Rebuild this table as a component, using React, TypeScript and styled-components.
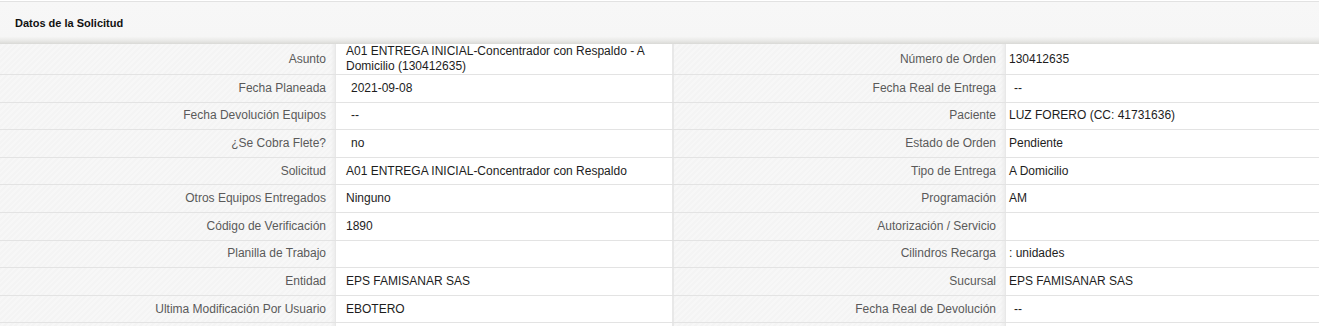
import styled, { createGlobalStyle } from 'styled-components';

const GlobalStyle = createGlobalStyle`
  body {
    margin: 0;
    background: #fff;
    font-family: 'Liberation Sans', Arial, sans-serif;
    font-size: 12px;
  }
`;

// one line of the detail sheet: label / value / label / value
type Field = { label: string; value: string; pad?: boolean };

const rows: [Field, Field][] = [
  [
    { label: 'Asunto', value: 'A01 ENTREGA INICIAL-Concentrador con Respaldo - A Domicilio (130412635)' },
    { label: 'Número de Orden', value: '130412635' },
  ],
  [
    { label: 'Fecha Planeada', value: '2021-09-08', pad: true },
    { label: 'Fecha Real de Entrega', value: '--', pad: true },
  ],
  [
    { label: 'Fecha Devolución Equipos', value: '--', pad: true },
    { label: 'Paciente', value: 'LUZ FORERO (CC: 41731636)' },
  ],
  [
    { label: '¿Se Cobra Flete?', value: 'no', pad: true },
    { label: 'Estado de Orden', value: 'Pendiente' },
  ],
  [
    { label: 'Solicitud', value: 'A01 ENTREGA INICIAL-Concentrador con Respaldo' },
    { label: 'Tipo de Entrega', value: 'A Domicilio' },
  ],
  [
    { label: 'Otros Equipos Entregados', value: 'Ninguno' },
    { label: 'Programación', value: 'AM' },
  ],
  [
    { label: 'Código de Verificación', value: '1890' },
    { label: 'Autorización / Servicio', value: '' },
  ],
  [
    { label: 'Planilla de Trabajo', value: '' },
    { label: 'Cilindros Recarga', value: ': unidades' },
  ],
  [
    { label: 'Entidad', value: 'EPS FAMISANAR SAS' },
    { label: 'Sucursal', value: 'EPS FAMISANAR SAS' },
  ],
  [
    { label: 'Ultima Modificación Por Usuario', value: 'EBOTERO' },
    { label: 'Fecha Real de Devolución', value: '--', pad: true },
  ],
  [
    { label: '', value: '' },
    { label: '', value: '' },
  ],
];

const Panel = styled.section`
  width: 1319px;
  overflow: hidden;
`;

const Header = styled.header`
  height: 43px;
  box-sizing: border-box;
  border-top: 1px solid #e2e2e2;
  margin-top: 1px;
  display: flex;
  align-items: center;
  padding-left: 15px;
  background: linear-gradient(to bottom, #f7f7f7 0%, #f6f6f6 82%, #e9e9e7 92%, #d9d9d6 100%);
  font-weight: bold;
  font-size: 11px;
  color: #111;
`;

const Sheet = styled.div`
  display: grid;
  grid-template-columns: 336px 336px 2px 332px 1fr;
`;

const Label = styled.div`
  display: flex;
  align-items: center;
  justify-content: flex-end;
  min-height: 26.6px;
  padding: 0 10px 0 8px;
  border-bottom: 1px solid #e3e3e3;
  color: #5a5a5a;
  background:
    linear-gradient(to right, rgba(0, 0, 0, 0) calc(100% - 5px), #ececec calc(100% - 1px), #e4e4e4 100%),
    repeating-linear-gradient(135deg, #f4f4f4 0 2px, #f7f7f7 2px 4px);
  text-align: right;
  line-height: 15px;
`;

const Value = styled.div<{ $pad?: boolean; $edge?: boolean }>`
  display: flex;
  align-items: center;
  min-height: 26.6px;
  padding: 0 10px 0 ${({ $pad, $edge }) => ($edge ? 3 : 10) + ($pad ? 5 : 0)}px;
  border-bottom: 1px solid #e3e3e3;
  color: #1d1d1d;
  background: #fff;
  line-height: 15px;
`;

const Divider = styled.div`
  background: #e8e8e8;
  border-bottom: 1px solid #e3e3e3;
`;

export default function App() {
  return (
    <>
      <GlobalStyle />
      <Panel>
        <Header>Datos de la Solicitud</Header>
        <Sheet>
          {rows.map(([left, right], i) => [
            <Label key={`l${i}`}>{left.label}</Label>,
            <Value key={`v${i}`} $pad={left.pad}>
              {left.value}
            </Value>,
            <Divider key={`d${i}`} />,
            <Label key={`r${i}`}>{right.label}</Label>,
            <Value key={`w${i}`} $pad={right.pad} $edge>
              {right.value}
            </Value>,
          ])}
        </Sheet>
      </Panel>
    </>
  );
}
